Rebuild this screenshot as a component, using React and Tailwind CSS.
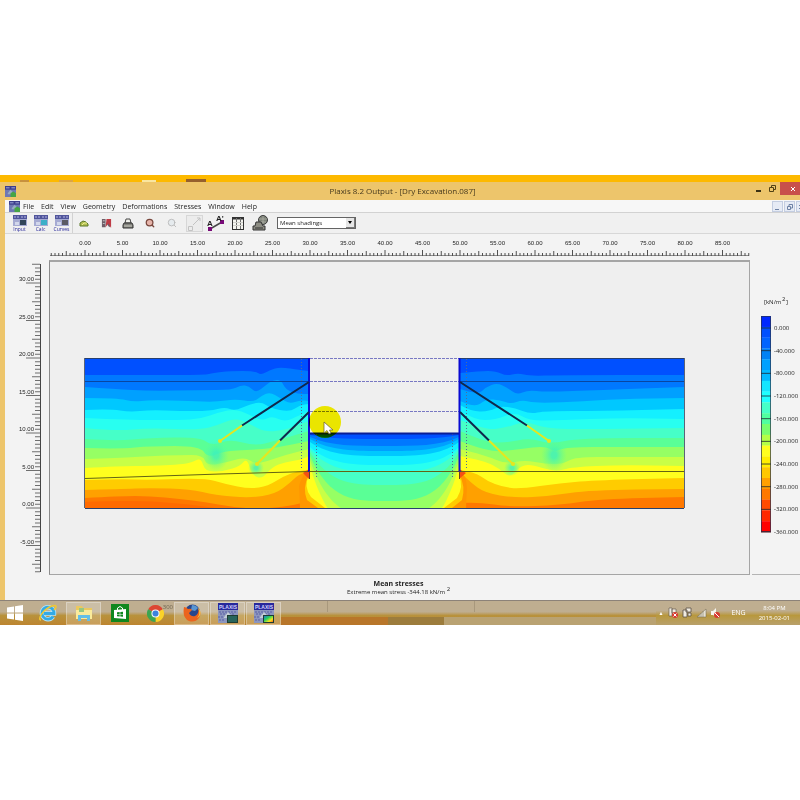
import { Search, FolderOpen, Printer } from "lucide-react";

const menus = ["File", "Edit", "View", "Geometry", "Deformations", "Stresses", "Window", "Help"];

const shades = [
  "#0050ff", "#0078ff", "#00a0ff", "#00c8ff", "#14f0ff", "#28fff0", "#46ffc8",
  "#5aff96", "#96ff64", "#c8ff46", "#ffff1e", "#ffcc00", "#ffa000", "#ff7800",
];

// upper edge of every band after the first one, from the surface down
const leftBands = [
  [[85, 375], [150, 375], [205, 375], [213, 373], [230, 371], [255, 371], [261, 375], [270, 370], [280, 367], [300, 370], [309, 371]],
  [[85, 387], [115, 389], [150, 391], [200, 390], [232, 390], [241, 385], [249, 386], [256, 393], [266, 385], [273, 380], [281, 380], [286, 390], [298, 394], [309, 394]],
  [[85, 398], [118, 398], [133, 402], [150, 400], [190, 401], [216, 402], [235, 399], [254, 402], [261, 396], [270, 392], [280, 398], [290, 404], [300, 400], [309, 401]],
  [[85, 410], [110, 409], [130, 412], [150, 410], [180, 411], [210, 411], [225, 407], [235, 411], [250, 404], [262, 402], [270, 408], [290, 412], [300, 405], [309, 404]],
  [[85, 418], [130, 420], [180, 420], [200, 419], [220, 412], [235, 409], [248, 414], [262, 421], [272, 416], [285, 422], [300, 415], [309, 411]],
  [[85, 428], [115, 431], [150, 428], [200, 430], [218, 425], [235, 418], [250, 424], [265, 432], [285, 430], [309, 421]],
  [[85, 439], [115, 441], [150, 438], [200, 437], [212, 446], [230, 439], [255, 446], [275, 441], [309, 431]],
  [[85, 448], [120, 449], [150, 446], [200, 446], [208, 458], [224, 451], [250, 450], [275, 448], [309, 441]],
  [[85, 459], [120, 458], [150, 456], [180, 455], [203, 455], [207, 466], [228, 462], [245, 457], [255, 464], [268, 461], [285, 455], [309, 449]],
  [[85, 468], [120, 466], [150, 466], [190, 464], [201, 457], [205, 472], [225, 471], [240, 466], [247, 458], [252, 475], [262, 479], [272, 467], [285, 462], [300, 460], [309, 456]],
  [[85, 480], [120, 479], [150, 480], [205, 478], [225, 484], [250, 489], [268, 486], [284, 476], [298, 471], [309, 470]],
  [[85, 490], [120, 489], [150, 488], [190, 489], [215, 495], [250, 498], [275, 494], [290, 483], [299, 474], [309, 472]],
  [[85, 498], [120, 496], [150, 496], [180, 499], [205, 502], [232, 507], [260, 509], [290, 506], [309, 501]],
];

const rightBands = [
  [[460, 373], [480, 371], [496, 371], [506, 376], [518, 373], [530, 376], [560, 375], [684, 375]],
  [[460, 389], [478, 395], [486, 387], [497, 383], [508, 388], [517, 395], [528, 390], [545, 392], [600, 390], [684, 387]],
  [[460, 401], [475, 408], [486, 399], [500, 400], [511, 404], [522, 400], [535, 403], [570, 402], [620, 399], [684, 398]],
  [[460, 405], [472, 412], [490, 411], [500, 406], [515, 408], [530, 414], [545, 411], [600, 411], [684, 409]],
  [[460, 411], [475, 420], [495, 420], [515, 412], [530, 421], [560, 420], [620, 418], [684, 419]],
  [[460, 420], [485, 430], [505, 428], [525, 421], [548, 429], [600, 429], [684, 428]],
  [[460, 431], [485, 442], [505, 443], [530, 438], [550, 444], [580, 438], [684, 438]],
  [[460, 441], [490, 453], [520, 449], [545, 446], [555, 452], [566, 447], [620, 447], [684, 447]],
  [[460, 449], [485, 455], [505, 464], [525, 460], [545, 464], [563, 464], [575, 457], [620, 457], [684, 457]],
  [[460, 456], [485, 461], [500, 469], [510, 478], [519, 467], [530, 464], [555, 472], [572, 467], [620, 465], [684, 466]],
  [[460, 470], [475, 472], [487, 481], [503, 487], [520, 489], [560, 483], [600, 480], [684, 478]],
  [[460, 472], [470, 482], [485, 493], [515, 498], [550, 496], [590, 490], [684, 489]],
  [[460, 503], [478, 502], [510, 507], [560, 505], [600, 499], [684, 497]],
];

// bowls of stress under the excavation floor: fill, depth at the wall, depth in the middle
const bowls = [
  ["#c8ff46", 466, 534],
  ["#96ff64", 460, 517],
  ["#5aff96", 456, 501],
  ["#46ffc8", 452, 485],
  ["#28fff0", 449, 472],
  ["#14f0ff", 447, 465],
  ["#00c8ff", 442, 456],
  ["#00a0ff", 439, 451],
  ["#0078ff", 437, 446],
  ["#0050ff", 435, 439],
];

// softer zones around the anchor bodies: centre and radii
const anchorZones = [
  [216, 455, 13, 16],
  [256, 468, 8, 8],
  [554, 455, 13, 16],
  [512, 468, 8, 8],
];

const legendColors = [
  "#0028ff", "#0050ff", "#0064ff", "#0082f5", "#00a0ff", "#00b9ff", "#14e6ff",
  "#1effff", "#46ffc8", "#50ffa0", "#78ff6e", "#b4ff46", "#ffff1e", "#ffee00",
  "#ffc800", "#ffa000", "#ff7800", "#ff4b00", "#ff2800", "#ff0000",
];

const legendLabels = ["0.000", "-40.000", "-80.000", "-120.000", "-160.000", "-200.000", "-240.000", "-280.000", "-320.000", "-360.000"];

function bandPath(points) {
  const first = points[0];
  const last = points[points.length - 1];
  let d = `M${first[0]} 508 L${first[0]} ${first[1]}`;
  for (let i = 1; i < points.length - 1; i++) {
    const [x, y] = points[i];
    const [nx, ny] = points[i + 1];
    d += ` Q${x} ${y} ${(x + nx) / 2} ${(y + ny) / 2}`;
  }
  return `${d} L${last[0]} ${last[1]} V508 Z`;
}

function Soil({ bands, x, width }) {
  return (
    <g>
      <rect x={x} y="358" width={width} height="150" fill={shades[0]} />
      {bands.map((points, i) => (
        <path key={i} d={bandPath(points)} fill={shades[i + 1]} />
      ))}
    </g>
  );
}

function Plot() {
  return (
    <svg viewBox="50 262 699 312" className="w-full h-[312px] block" role="img" aria-label="Mean stresses">
      <defs>
        <clipPath id="soil">
          <path d="M85 358H309V434H460V358H684V508H85Z" />
        </clipPath>
        <radialGradient id="zone">
          <stop offset=".2" stopColor="#3cf0be" stopOpacity=".8" />
          <stop offset="1" stopColor="#5aff96" stopOpacity="0" />
        </radialGradient>
      </defs>
      <g clipPath="url(#soil)">
        <Soil bands={leftBands} x={85} width={224} />
        <Soil bands={rightBands} x={460} width={225} />
        <path d="M85 502 Q130 500 160 502 T215 508 H85Z" fill="#ff6a00" />
        {anchorZones.map(([cx, cy, rx, ry]) => (
          <ellipse key={cx} cx={cx} cy={cy} rx={rx} ry={ry} fill="url(#zone)" />
        ))}
        <path d="M309 470 Q302 474 299 486 L300 508 H330 V470Z" fill="#ff9600" />
        <path d="M459 470 Q467 476 467 488 L466 508 H440 V470Z" fill="#ff9600" />
        <path d="M309 434V474Q302 488 307 500L318 508H452L462 500Q466 486 459 474V434Z" fill="#ffcc00" />
        <path d="M309 434V476Q303 486 311 497L325 508H444L457 498Q464 486 459 476V434Z" fill="#ffff1e" />
        {bowls.map(([fill, edge, depth]) => (
          <path key={fill} d={`M310 434 V${edge} C330 ${depth} 355 ${depth} 385 ${depth} S440 ${depth} 459 ${edge} V434 Z`} fill={fill} />
        ))}
        <path d="M309 469l-6 4 6 6zM459 469l7 4-7 6z" fill="#f55014" />
      </g>

      <g fill="none">
        <path d="M85 358.5H309M460 358.5H684M85 508.5H684" stroke="#28406e" />
        <path d="M84.5 358V508M684.5 358V508" stroke="#5a6478" />
        <path d="M85 381.5H309M460 381.5H684" stroke="#0a46a0" />
        <path d="M85 478.5L220 474 309 471.5H684" stroke="#646414" />
      </g>
      <g fill="none">
        <path d="M310 358.5H459M310 381.5H459M310 411.5H459" stroke="#7878c3" strokeDasharray="3 1" />
        <path d="M301.5 359V470M316.5 434V478M452.5 434V478M466.5 359V470" stroke="#506e96" strokeDasharray="1 2" />
      </g>
      <path d="M310 433.5H459" stroke="#0a1e96" strokeWidth="2" />
      <path d="M309 358V472M459.5 358V472" stroke="#0a0ad2" strokeWidth="2" />
      <path d="M309.5 471V479M459.5 471V479" stroke="#643c28" />

      <g fill="none" strokeWidth="2">
        <path d="M309 382L242 425.5M309 412L280 440.5M460 382L527 425.5M460 412L489 440.5" stroke="#10284b" />
        <path d="M242 425.5L220 441M280 440.5L257 464M527 425.5L549 441M489 440.5L513 464" stroke="#e6e61e" />
      </g>
      <g fill="#e6e61e">
        <circle cx="220" cy="441" r="2" />
        <circle cx="257" cy="464" r="2" />
        <circle cx="549" cy="441" r="2" />
        <circle cx="513" cy="464" r="2" />
      </g>

      <circle cx="325" cy="422" r="16" fill="#faf500" className="mix-blend-multiply" />
      <path d="M324 422V433L327 430.5L329 434L331 433L329.5 430H333Z" fill="#fff" stroke="#645a32" strokeWidth=".7" />
    </svg>
  );
}

function TopRuler() {
  const ticks = [];
  for (let i = -9; i <= 177; i++) ticks.push(i);
  const labels = Array.from({ length: 18 }, (_, i) => i * 5);
  return (
    <svg viewBox="49 234 701 26" className="w-full h-[26px] block" aria-hidden="true">
      <path d="M50 255.5H749" stroke="#8c8c8c" />
      {ticks.map((i) => (
        <path key={i} d={`M${85 + i * 3.75} 256V${i % 10 === 0 ? 250 : i % 5 === 0 ? 251 : 253}`} stroke="#505050" />
      ))}
      {labels.map((v) => (
        <text key={v} x={85 + v * 7.5} y="245" textAnchor="middle" className="font-['Liberation_Sans'] text-[6px] fill-[#1e1e1e]">
          {v.toFixed(2)}
        </text>
      ))}
    </svg>
  );
}

function SideRuler() {
  const ticks = [];
  for (let i = -17; i <= 65; i++) ticks.push(i);
  const labels = [30, 25, 20, 15, 10, 5, 0, -5];
  return (
    <svg viewBox="5 260 44 315" className="w-[44px] h-[315px] block" aria-hidden="true">
      <path d="M40.5 264V572" stroke="#464646" />
      {ticks.map((i) => (
        <path key={i} d={`M${i % 10 === 0 ? 26 : i % 5 === 0 ? 32 : 35} ${508 - i * 3.75}H40`} stroke="#6e6e6e" />
      ))}
      {labels.map((v) => (
        <text key={v} x="34" y={506 - v * 7.5} textAnchor="end" className="font-['Liberation_Sans'] text-[6px] fill-[#1e1e1e]">
          {v.toFixed(2)}
        </text>
      ))}
    </svg>
  );
}

function Legend() {
  return (
    <svg viewBox="752 262 48 313" className="w-[48px] h-[313px] block" role="img" aria-label="Stress scale">
      <text x="764" y="304" className="font-['Open_Sans'] text-[6px] fill-[#1e1e1e]">[kN/m</text>
      <text x="782" y="301" className="font-['Open_Sans'] text-[6px] fill-[#1e1e1e]">2</text>
      <text x="786" y="304" className="font-['Open_Sans'] text-[6px] fill-[#1e1e1e]">]</text>
      {legendColors.map((c, i) => (
        <rect key={c} x="761" y={316 + i * 10.8} width="10" height="11" fill={c} />
      ))}
      <rect x="761.5" y="316.5" width="9" height="215" fill="none" stroke="#283250" strokeOpacity=".7" />
      {legendLabels.map((label, i) => (
        <g key={label}>
          <path d={`M761 ${328 + i * 22.67}H771`} stroke="#1e2832" strokeOpacity=".8" />
          <text x="774" y={330 + i * 22.67} className="font-['Open_Sans'] text-[6px] fill-[#1e1e1e]">{label}</text>
        </g>
      ))}
    </svg>
  );
}

function AppIcon() {
  return (
    <svg viewBox="0 0 12 12" className="size-[11px]" aria-hidden="true">
      <rect width="12" height="12" fill="#6e78b4" />
      <path d="M0 0H12V4H0Z" fill="#3c3c8c" />
      <path d="M1 2H5M7 2H11" stroke="#aab4e1" />
      <path d="M3 8L6 4 9 7V9H3Z" fill="#96aac3" />
      <path d="M6 8L9 6L12 8V12H6Z" fill="#46a546" />
    </svg>
  );
}

function ProgramButton({ label, accent }) {
  return (
    <button type="button" className="w-[21px] flex flex-col items-center">
      <svg viewBox="0 0 14 11" className="w-[14px] h-[11px]" aria-hidden="true">
        <rect width="14" height="11" fill="#a5aad2" />
        <rect width="14" height="4" fill="#50559b" />
        <path d="M1 2H6M8 2H13" stroke="#b4b4e6" strokeDasharray="2 1" />
        <path d="M2 7H6V10H2Z" fill="#d2d7eb" />
        <rect x="7" y="5" width="6" height="5" fill={accent} />
      </svg>
      <span className="text-[5px] leading-[6px] text-[#1e1e96]">{label}</span>
    </button>
  );
}

function ToolButton({ label, children }) {
  return (
    <button type="button" aria-label={label} className="w-[22px] h-[20px] flex items-center justify-center">
      {children}
    </button>
  );
}

function Toolbar() {
  return (
    <div className="h-[21px] flex items-center bg-[#f0f0f0] border-t border-[#d2d2d2] pl-1">
      <ProgramButton label="Input" accent="#32465a" />
      <ProgramButton label="Calc" accent="#3cafc8" />
      <ProgramButton label="Curves" accent="#5a5a64" />
      <div className="w-px h-full bg-[#d2d2d2]" />
      <ToolButton label="Open">
        <svg viewBox="0 0 10 9" className="w-[10px] h-[9px]" aria-hidden="true">
          <path d="M1 7V4L4 2L7 3L9 5V7Z" fill="#b4be50" stroke="#5a7828" strokeLinejoin="round" />
          <path d="M3 6L5 4H8" stroke="#ebf096" fill="none" />
        </svg>
      </ToolButton>
      <ToolButton label="Find">
        <svg viewBox="0 0 12 12" className="size-[11px]" aria-hidden="true">
          <path d="M1 1H5V10H1ZM7 3L11 8 9 10 6 6Z" fill="#6e5f69" />
          <path d="M6 1L11 1 11 11 8 6 5 10Z" fill="#be3c46" />
          <path d="M2 3H4M2 6H4" stroke="#c8c8c8" />
        </svg>
      </ToolButton>
      <ToolButton label="Print">
        <svg viewBox="0 0 12 11" className="w-[12px] h-[11px]" aria-hidden="true">
          <path d="M3 5L4 1H8L9 5Z" fill="#f0f0eb" stroke="#464646" />
          <path d="M2 5H10L11 7V10H1V7Z" fill="#82827d" stroke="#323232" />
          <path d="M2 8H10" stroke="#c8c8be" />
        </svg>
      </ToolButton>
      <ToolButton label="Zoom in">
        <Search size={10} color="#78463c" fill="#e6b4aa" strokeWidth={3} />
      </ToolButton>
      <ToolButton label="Zoom out">
        <Search size={10} color="#b4b4b4" fill="#e6ebee" strokeWidth={2} />
      </ToolButton>
      <ToolButton label="Fit to window">
        <svg viewBox="0 0 17 17" className="size-[17px]" fill="none" stroke="#c3c3c3" aria-hidden="true">
          <rect x=".5" y=".5" width="16" height="16" stroke="#d7d7d7" fill="#ececec" />
          <path d="M2.5 11.5H6.5V15.5H2.5ZM7 10L14 3M11 3H14V6" />
        </svg>
      </ToolButton>
      <ToolButton label="Cross section">
        <svg viewBox="0 0 18 18" className="size-[18px]" aria-hidden="true">
          <path d="M3 15L15 8" stroke="#464646" strokeWidth="1.5" />
          <rect x="1" y="13" width="4" height="4" fill="#780a78" />
          <rect x="13" y="6" width="4" height="4" fill="#780a78" />
          <text x="0" y="12" className="font-['Liberation_Sans'] font-bold text-[8px] fill-[#1e1e1e]">A</text>
          <text x="9" y="7" className="font-['Liberation_Sans'] font-bold text-[8px] fill-[#1e1e1e]">A'</text>
        </svg>
      </ToolButton>
      <ToolButton label="Table">
        <svg viewBox="0 0 12 13" className="w-[12px] h-[13px]" aria-hidden="true">
          <rect x=".5" y=".5" width="11" height="12" fill="#f5f5f0" stroke="#323232" />
          <path d="M0 1.5H12" stroke="#323232" strokeWidth="2" />
          <path d="M4.5 1V12M8.5 1V12" stroke="#6e6e6e" />
          <path d="M1 5.5H11M1 8.5H11" stroke="#d2d2cd" />
        </svg>
      </ToolButton>
      <ToolButton label="Print all">
        <svg viewBox="0 0 17 17" className="size-[17px]" aria-hidden="true">
          <circle cx="11" cy="5" r="4.5" fill="#7d8278" stroke="#3c3c3c" />
          <path d="M7 4H15M8 7H14M11 1V9" stroke="#b4b4aa" strokeWidth=".7" />
          <path d="M4 7H9L11 11H13V15H1V11H3Z" fill="#8c8c82" stroke="#323232" />
          <path d="M3 13H11" stroke="#323232" />
        </svg>
      </ToolButton>
      <label className="relative ml-[6px] w-[79px]">
        <select
          aria-label="Shading type"
          defaultValue="Mean shadings"
          className="block w-full h-[12px] appearance-none bg-white border border-[#646464] pl-[2px] text-[6px] leading-[10px] text-[#1e1e1e] font-['Open_Sans']"
        >
          <option>Mean shadings</option>
        </select>
        <span className="pointer-events-none absolute right-px top-px w-[9px] h-[10px] bg-[#e6e6e6] border-r border-b border-[#787878] flex items-center justify-center">
          <span className="border-x-2 border-x-transparent border-t-3 border-t-black" />
        </span>
      </label>
    </div>
  );
}

function WindowsLogo() {
  return (
    <svg viewBox="0 0 16 16" className="size-[16px]" fill="#fff" aria-hidden="true">
      <path d="M0 2.5L7 1.5V7.5H0ZM8 1.3L16 0V7.5H8ZM0 8.5H7V14.5L0 13.5ZM8 8.5H16V16L8 14.7Z" />
    </svg>
  );
}

function ExplorerE() {
  return (
    <svg viewBox="0 0 20 20" className="size-[20px]" fill="none" aria-hidden="true">
      <path d="M15 13.5A6 6 0 1 1 16 10.5H6" stroke="#b4e6fa" strokeWidth="4.5" />
      <path d="M15 13.5A6 6 0 1 1 16 10.5H6" stroke="#32aae6" strokeWidth="2.8" />
      <path d="M3 17C-1 17 5 6 14 3C19 1.5 19 4 16 7" stroke="#f0c832" strokeWidth="1.5" />
    </svg>
  );
}

function Folders() {
  return (
    <svg viewBox="0 0 20 20" className="size-[20px]" aria-hidden="true">
      <path d="M2 3H8L9 5H18V16H2Z" fill="#ebc85f" />
      <path d="M2 7H18V16H2Z" fill="#faeb9b" />
      <path d="M5 5H10V9H5Z" fill="#96c882" />
      <path d="M4 18V12H16V18H13V15H7V18Z" fill="#64bee6" />
    </svg>
  );
}

function Store() {
  return (
    <svg viewBox="0 0 18 18" className="size-[18px]" aria-hidden="true">
      <rect width="18" height="18" fill="#0f871e" />
      <path d="M3 6L15 5V15L3 14Z" fill="#fff" />
      <path d="M6.5 6V4Q9 1 11.5 4V6" stroke="#fff" fill="none" />
      <path d="M6 8.2L8.7 8V10H6ZM9.3 8L12 7.8V10H9.3ZM6 10.6H8.7V12.5L6 12.3ZM9.3 10.6H12V12.8L9.3 12.6Z" fill="#0f871e" />
    </svg>
  );
}

function Chrome() {
  return (
    <svg viewBox="0 0 18 18" className="size-[17px]" aria-hidden="true">
      <path d="M9 9L1.2 4.5A9 9 0 0 1 16.8 4.5Z" fill="#dc4632" />
      <path d="M9 9L16.8 4.5A9 9 0 0 1 9 18Z" fill="#fad228" />
      <path d="M9 9V18A9 9 0 0 1 1.2 4.5Z" fill="#3ca550" />
      <circle cx="9" cy="9" r="4.3" fill="#f5f5f5" />
      <circle cx="9" cy="9" r="3.2" fill="#3c82dc" />
    </svg>
  );
}

function Firefox() {
  return (
    <svg viewBox="0 0 18 18" className="size-[18px]" aria-hidden="true">
      <circle cx="9.5" cy="8" r="7.5" fill="#28468c" />
      <path d="M9 1Q13 1 15 4L12 7 8 6Z" fill="#5a96d2" />
      <path d="M1 3Q3 3 5 5Q8 4 9 6L6 9Q8 13 12 12Q16 10 15.5 4Q19 9 16 14Q12 19 6 17Q-1 14 1 3Z" fill="#eb641e" />
      <path d="M15 4Q18 10 14 14Q17 13 17.5 9Q17 5 15 4Z" fill="#fac83c" />
    </svg>
  );
}

function PlaxisIcon({ color }) {
  return (
    <svg viewBox="0 0 20 20" className="size-[20px]" aria-hidden="true">
      <defs>
        <linearGradient id="spectrum" x1="0" y1="0" x2="1" y2="1">
          <stop offset="0" stopColor="#1e64e6" />
          <stop offset=".4" stopColor="#28d25a" />
          <stop offset=".7" stopColor="#fae61e" />
          <stop offset="1" stopColor="#f03c14" />
        </linearGradient>
      </defs>
      <rect width="20" height="20" fill="#8c96be" />
      <rect width="20" height="7" fill="#28289b" />
      <path d="M1 9H19M2 11H17M0 14H8M1 17H7" stroke="#5a5fa5" strokeDasharray="2 1" />
      <path d="M6 14L10 9L14 13V15H6Z" fill="#c3cdd7" />
      <rect x="9.5" y="12.5" width="10" height="7" fill={color} stroke="#1e3c32" />
      <text x="10" y="6" textAnchor="middle" className="font-['Liberation_Sans'] font-bold text-[5px] fill-[#d2d2ff]">PLAXIS</text>
    </svg>
  );
}

function TaskButton({ label, lit, children }) {
  return (
    <button
      type="button"
      aria-label={label}
      className={`w-[35px] h-[23px] flex items-center justify-center ${lit ? "bg-white/20 border border-white/30" : ""}`}
    >
      {children}
    </button>
  );
}

function Taskbar() {
  return (
    <footer className="h-[25px] flex items-center border-t border-[#8c8278] bg-linear-to-b from-[#bfae90] from-45% via-[#b8923c] via-60% to-[#bd8530] text-white font-['Open_Sans']">
      <button type="button" aria-label="Start" className="w-[30px] flex justify-center"><WindowsLogo /></button>
      <div className="flex gap-px">
        <TaskButton label="Internet Explorer"><ExplorerE /></TaskButton>
        <TaskButton label="File Explorer" lit><Folders /></TaskButton>
        <TaskButton label="Store"><Store /></TaskButton>
        <div className="relative">
          <TaskButton label="Chrome"><Chrome /></TaskButton>
          <span className="absolute right-0 top-0 text-[6px] leading-[10px] text-[#6e6450]">300</span>
        </div>
        <TaskButton label="Firefox" lit><Firefox /></TaskButton>
        <TaskButton label="Plaxis Calculations" lit><PlaxisIcon color="#28645a" /></TaskButton>
        <TaskButton label="Plaxis Output" lit><PlaxisIcon color="url(#spectrum)" /></TaskButton>
      </div>
      <div className="flex-1 self-stretch flex flex-col">
        <div className="h-[11px] ml-[46px] w-[148px] border-x border-[#a8987c]" />
        <div className="mt-[5px] flex-1 flex">
          <div className="flex-1 bg-[#b8762a]" />
          <div className="w-[56px] bg-[#9c7c3c]" />
          <div className="w-[212px] bg-[#b9a272]" />
        </div>
      </div>
      <div className="self-stretch flex items-center gap-[5px] bg-linear-to-b from-[#bfae90] from-40% via-[#b8983c] via-60% to-[#b8a06a] pl-[2px] pr-[10px]">
        <button type="button" aria-label="Show hidden icons" className="text-[5px] leading-[6px]">▲</button>
        <svg viewBox="0 0 54 12" className="w-[54px] h-[12px]" aria-hidden="true">
          <path d="M1 1H4V9H1ZM4 2H8V6H4Z" fill="#f0ebe1" stroke="#5a5046" strokeWidth=".6" />
          <circle cx="7" cy="8" r="3" fill="#d73c32" />
          <path d="M5.5 6.5L8.5 9.5M8.5 6.5L5.5 9.5" stroke="#fff" />
          <path d="M15 3H19V10H15ZM18 1H23V5H18ZM20 6H23V9H20Z" fill="#f0ebe1" stroke="#5a5046" strokeWidth=".8" />
          <path d="M29 10L38 2V10Z" fill="#e6e1d2" stroke="#6e6450" strokeWidth=".5" />
          <path d="M31 8V10M33 6V10M35 4V10" stroke="#827864" strokeWidth=".6" />
          <path d="M43 4H45L48 1V10L45 8H43Z" fill="#f5f5f0" />
          <circle cx="49" cy="8" r="3" fill="#d73c32" />
          <path d="M47 6L51 10" stroke="#fff" />
        </svg>
        <span className="text-[7px] leading-[10px] mx-1">ENG</span>
        <div className="text-center text-[6px] leading-[10px] ml-1">
          <div>8:04 PM</div>
          <div>2015-02-01</div>
        </div>
      </div>
    </footer>
  );
}

function TitleBar() {
  return (
    <header className="h-[18px] flex items-center bg-[#edc56b] pl-[5px]">
      <div className="flex-1"><AppIcon /></div>
      <h1 className="text-[8px] leading-[12px] text-[#46391e]">Plaxis 8.2 Output - [Dry Excavation.087]</h1>
      <div className="flex-1 self-start flex justify-end">
        <button type="button" aria-label="Minimize" className="w-[14px] h-[13px] flex items-center justify-center">
          <span className="w-[5px] h-[2px] mt-1 bg-[#3c3214]" />
        </button>
        <button type="button" aria-label="Restore" className="w-[15px] h-[13px] flex items-center justify-center">
          <svg viewBox="0 0 7 7" className="size-[7px]" fill="none" stroke="#504114" aria-hidden="true">
            <path d="M.5 2.5H4.5V6.5H.5ZM2.5 2V.5H6.5V4.5H5" />
          </svg>
        </button>
        <button type="button" aria-label="Close" className="w-[20px] h-[13px] bg-[#c8504b] flex items-center justify-center pl-[6px]">
          <svg viewBox="0 0 6 6" className="size-[6px]" stroke="#fff" aria-hidden="true">
            <path d="M1 1L5 5M5 1L1 5" />
          </svg>
        </button>
      </div>
    </header>
  );
}

const childControls = [
  { label: "Minimize drawing", d: "M2 7.5H6" },
  { label: "Restore drawing", d: "M2.5 4.5H5.5V7.5H2.5ZM4 4V2.5H7.5V6H6" },
  { label: "Close drawing", d: "M2 3L6 7M6 3L2 7" },
];

function MenuBar() {
  return (
    <nav className="h-[12px] flex items-center bg-[#f7f7f7] pl-1">
      <AppIcon />
      <div className="flex-1 flex gap-[7px] ml-[3px]">
        {menus.map((item) => (
          <button key={item} type="button" className="text-[7px] leading-[11px] text-[#1e1e1e]">{item}</button>
        ))}
      </div>
      <div className="flex gap-px overflow-hidden w-[28px]">
        {childControls.map(({ label, d }) => (
          <button key={label} type="button" aria-label={label} className="shrink-0 w-[11px] h-[11px] border border-[#c3cde1] bg-[#e6ebf5]">
            <svg viewBox="0 0 9 9" className="size-[9px]" fill="none" stroke="#6e82a5" aria-hidden="true">
              <path d={d} />
            </svg>
          </button>
        ))}
      </div>
    </nav>
  );
}

function App() {
  return (
    <div className="min-h-screen bg-white pt-[175px] font-['Open_Sans',sans-serif]">
      <div className="bg-[#edc56b]">
        <div className="h-[7px] bg-[#fdb900] flex items-end">
          <div className="ml-[20px] w-[9px] h-[2px] bg-[#c8913c]" />
          <div className="ml-[30px] w-[14px] h-[2px] bg-[#dca546]" />
          <div className="ml-[69px] w-[14px] h-[2px] bg-[#fae6a0]" />
          <div className="ml-[30px] w-[20px] h-[3px] bg-[#96602d]" />
        </div>
        <TitleBar />
        <main className="ml-[5px] bg-[#f3f3f3]">
          <MenuBar />
          <Toolbar />
          <div className="grid grid-cols-[44px_1fr_50px] border-t border-[#d7d7d7]">
            <div />
            <TopRuler />
            <div />
            <SideRuler />
            <div className="border-t-2 border-l border-r border-b border-t-[#a5a5a5] border-l-[#8c8c8c] border-r-[#a5a5a5] border-b-[#a5a5a5] bg-[#efefef]">
              <Plot />
            </div>
            <div className="pt-[2px] pl-[2px]">
              <div className="border-b border-[#b4b4b4] h-[313px]"><Legend /></div>
            </div>
          </div>
          <div className="h-[25px] pt-1 pr-[8px] text-center text-[#1e1e1e]">
            <h2 className="text-[7px] leading-[9px] font-bold">Mean stresses</h2>
            <p className="text-[6px] leading-[8px]">
              Extreme mean stress -344.18 kN/m <sup className="text-[6px]">2</sup>
            </p>
          </div>
        </main>
        <Taskbar />
      </div>
    </div>
  );
}

export default App;
